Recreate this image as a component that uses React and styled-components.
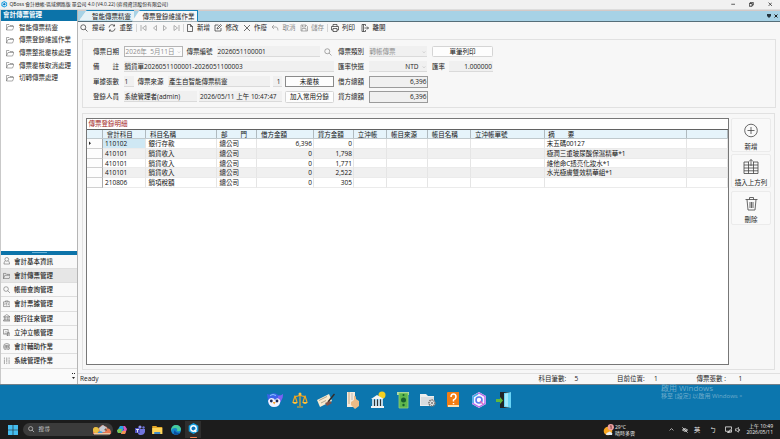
import React from "react";
import styled, { createGlobalStyle, css } from "styled-components";

const GlobalStyle = createGlobalStyle`
  * { box-sizing: border-box; }
  body { margin: 0; overflow: hidden; }
  svg { display: block; flex: none; }
`;

const Screen = styled.div`
  width: 780px; height: 439px; display: flex; flex-direction: column;
  font-family: "Open Sans", "Noto Sans CJK TC", sans-serif;
  font-size: 6.5px; line-height: 9px; color: #1c1c1c; white-space: pre;
  background: #0c76ae; overflow: hidden;
`;
const TitleBar = styled.header`
  height: 9.5px; flex: none; display: flex; align-items: center; background: #f1f1f1;
  padding: 0 8px 0 1px; border-bottom: 0.5px solid #ddd;
`;
const TitleText = styled.span`font-size: 4.87px; margin-left: 2px; color: #222; flex: 1;`;
const WindowButtons = styled.div`display: flex; gap: 14px; align-items: center;`;
const Body = styled.div`display: flex; height: 374px; flex: none; background: #f7f7f7;`;

const Sidebar = styled.aside`
  width: 78px; flex: none; display: flex; flex-direction: column;
  border-left: 1px solid #c9c9c9; border-right: 1px solid #b5b5b5; background: #fff;
`;
const SideHead = styled.div`
  height: 11.5px; background: #0c73a9; color: #fff; font-weight: 600; padding: 0.5px 2px; line-height: 10px;
`;
const Tree = styled.div`flex: 1; padding-top: 0;`;
const TreeItem = styled.div`
  height: 12.65px; display: flex; align-items: center; gap: 5px; padding-left: 5px; color: #222;
`;
const Splitter = styled.div`
  height: 3.5px; background: #0c73a9; display: flex; justify-content: center; align-items: center;
  &::after { content: ""; width: 15px; height: 1px; background: #69b1d7; }
`;
const NavItem = styled.div`
  height: 14.25px; display: flex; align-items: center; gap: 4px; padding-left: 1.5px;
  border-bottom: 1px solid #dedede; background: ${p => (p.$active ? "#e6e6e6" : "#f9f9f9")};
  font-weight: 500; color: #222;
`;
const NavFoot = styled.div`
  height: 15px; background: #fafafa; display: flex; align-items: center; justify-content: flex-end; padding: 0 2px 1px 0;
`;

const Main = styled.main`flex: 1; min-width: 0; display: flex; flex-direction: column;`;
const TabStrip = styled.div`
  height: 12px; flex: none; background: #a7d2e6; border-top: 1px solid #d5c9c6; border-bottom: 1px solid #566e79;
  display: flex; align-items: flex-end; padding: 0 1px 0 0;
`;
const Tab = styled.div`
  width: ${p => p.$w}px; height: ${p => (p.$active ? 12 : 11)}px; margin-bottom: ${p => (p.$active ? -1 : 0)}px;
  margin-left: ${p => (p.$active ? -2 : 1)}px; z-index: ${p => (p.$active ? 1 : 0)};
  background: ${p => (p.$active ? "#f8f8f8" : "#e6f1f6")};
  clip-path: polygon(8px 0, 100% 0, 100% 100%, 0 100%);
  border-top: 1px solid #1883bb; ${p => p.$active && css`border-right: 1px solid #1883bb;`}
  background-image: linear-gradient(125deg, #1883bb 0, #1883bb 4.9px, transparent 5.5px);
  padding-left: ${p => (p.$active ? 10.5 : 13)}px; line-height: 11px; font-weight: 400;
`;
const TabTools = styled.div`margin-left: auto; align-self: center; display: flex; gap: 3px; align-items: center; padding-right: 1px;`;
const Toolbar = styled.div`height: 13px; flex: none; display: flex; align-items: center; margin-top: -0.5px;`;
const Tool = styled.div`
  display: flex; align-items: center; gap: ${p => p.$gap ?? 3.5}px; margin-left: ${p => p.$ml}px;
  color: ${p => (p.$off ? "#8a8a8a" : "#222")};
`;
const Divider = styled.i`width: 1px; height: 8px; background: #d5d5d5; margin-left: ${p => p.$ml}px;`;

const FormPanel = styled.section`
  margin: 4.5px 4px 0; height: 69px; flex: none; border: 1px solid #e1e1e1; padding-top: 4.5px;
`;
const FormRow = styled.div`height: 15.1px; display: flex; align-items: center; padding-left: 10px;`;
const Label = styled.span`
  width: ${p => p.$w ?? 30.5}px; flex: none; margin-left: ${p => p.$ml ?? 0}px; color: #222;
`;
const Field = styled.div`
  width: ${p => p.$w}px; height: 11px; flex: none; margin-left: ${p => p.$ml ?? 0}px; padding: 1px 1px 0;
  line-height: 10px; background: #f0f0f0; border-bottom: 1px solid #dadada;
  display: flex; align-items: center; justify-content: ${p => (p.$right ? "flex-end" : "flex-start")};
  color: ${p => (p.$off ? "#8f8f8f" : "#222")};
`;
const DateField = styled(Field)`
  background: #fbfbfb; border: 1px solid #b5b5b5; justify-content: space-between; height: 11.5px; padding-top: 0;
`;
const SelectField = styled(Field)`gap: 3px; justify-content: ${p => (p.$right ? "flex-end" : "space-between")};`;
const TotalField = styled(Field)`height: 12px; border: 1px solid #9b9b9b; justify-content: flex-end; padding: 0; line-height: 9px;`;
const Button = styled.button`
  width: ${p => p.$w}px; height: 11.5px; flex: none; margin: 0 0 0 ${p => p.$ml ?? 0}px; padding: 0;
  font: inherit; line-height: 8px; color: #111; background: #fdfdfd;
  border: 1px solid ${p => (p.$strong ? "#8a8a8a" : "#d5d5d5")}; border-radius: ${p => (p.$strong ? 0 : 1.5)}px;
`;

const DetailPanel = styled.section`
  margin: 5px 5px 0 4px; height: 257px; flex: none; border: 1px solid #e1e1e1;
  display: flex; padding: 4px 3px 4px 3px; gap: 2px;
`;
const GridBox = styled.div`
  width: 643px; height: 247px; border: 1px solid #777; background: #fff; display: flex; flex-direction: column;
`;
const Caption = styled.div`height: 10px; color: #a32525; padding-left: 1.5px; line-height: 10px;`;
const Row = styled.div`
  display: grid; grid-template-columns: 16px 43.4px 71px 40px 56.6px 40px 33.4px 40.6px 43.4px 73.3px 142.4px 1fr;
  height: ${p => (p.$head ? 10.5 : 9.75)}px; line-height: ${p => (p.$head ? 9.6 : 10)}px; width: 641px;
  background: ${p => (p.$head ? "#e6f4fb" : p.$alt ? "#f0f0f0" : "#fff")};
  ${p => p.$head && css`border-top: 1px solid #626262; border-bottom: 0.5px solid #c0c9cd;`}
`;
const Cell = styled.div`
  border-right: 1px solid ${p => (p.$head ? "#b0babf" : "#e5e5e5")};
  ${p => !p.$head && css`border-bottom: 0.5px solid #ebebeb;`}
  padding: 0 ${p => (p.$head ? 3.7 : 2)}px; text-align: ${p => (p.$num ? "right" : "left")};
  overflow: hidden; color: #111;
  ${p => p.$num && css`padding-right: 1px;`}
  ${p => p.$marker && css`background: #fdfdfd; border-bottom: 1px solid #cfcfcf; border-right-color: #aaa; padding-left: 2px;`}
  ${p => p.$selected && css`background: #cfe8f4;`}
`;
const Actions = styled.div`width: 40px; display: flex; flex-direction: column; gap: 2.5px;`;
const Action = styled.div`
  height: 34px; border: 1px solid #ebebeb; border-radius: 2px; background: #f9f9f9; color: #222;
  display: flex; flex-direction: column; align-items: center; padding-top: 4px; gap: 4px;
`;
const StatusBar = styled.footer`
  margin-top: auto; height: 10.5px; border-top: 1px solid #e0e0e0; display: flex; align-items: center; padding-left: 2px;
`;
const Status = styled.span`width: ${p => p.$w}px; flex: none;`;

const Desktop = styled.div`
  height: 36.5px; flex: none; border-top: 1px solid #71808a; background: #0c76ae;
  display: flex; padding-left: 267px; position: relative;
`;
const Launcher = styled.div`display: flex; align-items: center; gap: 9.2px; padding-bottom: 5px;`;
const Watermark = styled.div`
  position: absolute; left: 661px; top: -2px; color: #6faccb; font-size: 6.05px; line-height: 8px;
  strong { display: block; font-weight: 400; font-size: 8px; line-height: 9px; }
`;
const Taskbar = styled.div`
  height: 19px; flex: none; background: #1c1c1c; color: #eee; display: flex; align-items: center; padding: 0 7px 0 8px;
`;
const SearchPill = styled.div`
  width: 90px; height: 13px; border-radius: 7px; background: #3b3b3b; margin-left: 5px; display: flex; align-items: center;
  padding: 0 1px 0 5px; gap: 4px; font-size: 5.7px; color: #ccc;
  span { flex: 1; }
`;
const Apps = styled.div`display: flex; gap: 7.7px; align-items: center; margin-left: 4px;`;
const ActiveApp = styled.div`
  width: 16px; height: 17px; margin-left: -3px; background: #2e2e2e; display: flex; flex-direction: column; align-items: center;
  justify-content: space-between; padding-top: 2px;
  &::after { content: ""; height: 1px; width: 7px; background: #ef8050; border-radius: 1px; }
`;
const Weather = styled.div`margin-left: auto; display: flex; gap: 1px; align-items: center; width: 65.5px; font-size: 5px; line-height: 6px;`;
const Tray = styled.div`display: flex; align-items: center; color: #f2f2f2; font-size: 6.2px;`;
const TraySlot = styled.div`width: ${p => p.$w}px; display: flex;`;
const Clock = styled.div`font-size: 5px; line-height: 6px; text-align: right; width: 29px; padding-bottom: 1px;`;

/* Line icons share one 16-unit grid */
const paths = {
  search: "M6.5 1.5a5 5 0 1 0 0 10a5 5 0 1 0 0-10M10.2 10.2L15 15",
  refresh: "M2 7a6 6 0 0 1 11-3v-3m0 3h-3M14 9a6 6 0 0 1-11 3v3m0-3h3",
  first: "M2 2v12M12 3L5 8l7 5z",
  prev: "M11 3L5 8l6 5z",
  next: "M5 3l6 5l-6 5z",
  last: "M14 2v12M4 3l7 5l-7 5z",
  file: "M3 1h6l4 4v10H3zM9 1v4h4",
  edit: "M9 2H2v12h12V8M6 10l1-3l6-6l2 2l-6 6z",
  close: "M2 2l12 12M14 2L2 14",
  undo: "M6 2L2 6l4 4M2 6h8q4 0 4 7",
  save: "M2 2h10l3 3v9H2zM5 2v4h6V2M4 14V9h8v5",
  print: "M4 5V1h8v4M4 12H1V5h14v7h-3M4 9h8v6H4z",
  exit: "M9 4V1H2v14h7v-3M5 1v14M7 8h8M12 5l3 3l-3 3",
  folder: "M1 14V3h5l2 2h6v2M1 14l3-7h12l-3 7z",
  user: "M8 1a4 4 0 1 0 0 8a4 4 0 1 0 0-8M5 8Q2 10 2 15h12q0-5-3-7",
  case: "M1 4h14v10H1zM5 4V2h6v2M6 8l2-2v6M4 7v4M12 7v4",
  bank: "M1 6l7-5l7 5zM3 6v7M6 6v7M10 6v7M13 6v7M1 13h14v2H1z",
  chart: "M1 1h10v10H1zM3 9h5M5 4l3 3M8 14h4M10 7l5 2v5l-3 2l-3-3zM11 11h3",
  coin: "M8 1a7 7 0 1 0 0 14a7 7 0 1 0 0-14M4 5h8v6H4zM4 8h8M8 5v6",
  sliders: "M3 1v2M3 6v9M8 1v8M8 12v3M13 1v2M13 6v9M2 4h2M7 10h2M12 4h2",
  chevron: "M3 6l5 5l5-5",
  up: "M2 11l6-6l6 6",
  min: "M1 8h14",
  restore: "M1 5h10v10H1zM5 5V1h10v10h-4",
  eyeoff: "M1 8q7-8 14 0q-7 8-14 0M1 1l14 14M6 8h4",
  net: "M11 12H1V2h14v6M5 15h6M11 9h4v5h-4zM8 12v3",
  sound: "M1 5h4l4-4v13l-4-4H1zM11 5q4 3 0 6",
};
const Icon = ({ n, s = 8, w = 1.3, c = "currentColor", fill = "none" }) => (
  <svg width={s} height={s} viewBox="0 0 16 16" fill={fill} stroke={c} strokeWidth={w} strokeLinejoin="round"><path d={paths[n]} /></svg>
);
const HexLogo = ({ s }) => (
  <svg width={s} height={s} viewBox="0 0 16 16"><path d="M8 0l7 4v8l-7 4l-7-4V4z" fill="#16a0e2" /><circle cx="8" cy="8" r="4" fill="#0873bd" stroke="#fff" strokeWidth="2" /><path d="M9 10l3 3" stroke="#fff" strokeWidth="2" /></svg>
);
const BigIcon = ({ children }) => <svg width="16" height="18" viewBox="0 0 16 18">{children}</svg>;

const Launchers = () => (
  <Launcher>
    <BigIcon>
      <path d="M0 3q3 1 4 0q4-2 7 1q3 1 5-1q0 4-2 7q-2 6-7 6q-6-1-6-7z" fill="#3c63ea" />
      <path d="M11 5q3 0 5-2q0 4-2 7l-3 3z" fill="#7d62f0" />
      <path d="M1 10q1-3 3.500-3T8 9q2-3 4-1q2 1 1 4q-1 4-6 4t-6-6" fill="#f2f3ff" />
      <circle cx="4.300" cy="10" r="1.400" fill="#202853" /><circle cx="10" cy="10" r="1.400" fill="#202853" />
      <path d="M5.700 11h3l-1.500 2.500z" fill="#f59a28" /><path d="M3 4.500q3-2 6 0" fill="none" stroke="#86c9ff" />
    </BigIcon>
    <BigIcon>
      <path d="M8 2v13M2 5q3 1 6-1q3 2 6 1M5 16h6M3 5l-2 6M3 5l2 6M13 5l-2 6M13 5l2 6" fill="none" stroke="#f1a51e" strokeWidth="1.2" />
      <path d="M0 11h6q-3 4-6 0M10 11h6q-3 4-6 0" fill="#ffc13c" /><circle cx="8" cy="3" r="1.5" fill="#ffc13c" />
    </BigIcon>
    <svg width="18" height="18" viewBox="0 0 18 18">
      <path d="M0 9L12 3l3 7L3 16z" fill="#f6ead0" /><path d="M2 9.500l8-4M4 12l5-2.500" stroke="#b5a88e" />
      <path d="M11 11l6.500-8" stroke="#332b29" strokeWidth="1.500" /><path d="M8 12l5-2l2 2l-5 3z" fill="#80534a" />
    </svg>
    <BigIcon>
      <path d="M2 1h8v15H2z" fill="#f5eadb" /><path d="M4 1v12" stroke="#c8a87e" /><path d="M7 2v7" stroke="#bbb" />
      <path d="M6 11l3-2V5q2-1 2 3l3 2v5l-4 3l-4-4z" fill="#eebb86" />
    </BigIcon>
    <BigIcon>
      <circle cx="12" cy="4" r="3.5" fill="#f5d020" /><path d="M1 8l6-4l7 4zM1 15h13v2H1z" fill="#f3f3f3" />
      <path d="M3 8v7M6 8v7M9 8v7M12 8v7" stroke="#f6f6f6" strokeWidth="1.5" /><path d="M4.5 9v6M7.5 9v6M10.5 9v6" stroke="#333" strokeWidth="1" />
    </BigIcon>
    <BigIcon>
      <path d="M2 1h12v3H2z" fill="#b5dca7" /><path d="M4 2h9v15H4z" fill="#5fb74d" stroke="#94cf73" strokeWidth=".8" />
      <circle cx="8.5" cy="9" r="2.5" fill="#17612e" /><circle cx="8.5" cy="4" r="1" fill="#17612e" /><circle cx="8.5" cy="14" r="1.2" fill="#17612e" />
    </BigIcon>
    <BigIcon>
      <path d="M0 3h6l2 2h6v10H0z" fill="#eceded" /><path d="M1 6h13v8H1z" fill="#d8dcdf" />
      <circle cx="12" cy="12" r="3" fill="#e2e2e2" stroke="#777" strokeWidth="1.7" strokeDasharray="1.4 .8" /><circle cx="12" cy="12" r="1" fill="#777" />
    </BigIcon>
    <BigIcon>
      <path d="M2 2q0-1 1-1h11v15H3q-1 0-1-1z" fill="#f27d13" /><path d="M3 14h11v2H3z" fill="#ffe0ae" />
      <path d="M6 6q0-3 2.5-3T11 6q0 2-2.5 3v1.5M8.5 12v1.3" fill="none" stroke="#fff" strokeWidth="1.5" />
    </BigIcon>
    <BigIcon>
      <path d="M8 1l7 4v8l-7 4l-7-4V5z" fill="#f8f2ff" /><path d="M8 2l6 3.5v7L8 16l-6-3.5v-7z" fill="none" stroke="#b66ae7" strokeWidth="1.4" />
      <path d="M2 12V6l5-3" fill="none" stroke="#35bdea" strokeWidth="1.4" /><circle cx="8" cy="9" r="3" fill="#fff" stroke="#5b7df0" strokeWidth="1.6" /><path d="M9 10l3 3" stroke="#e269bf" strokeWidth="1.5" />
    </BigIcon>
    <BigIcon>
      <path d="M4 1h11v16H4z" fill="#202428" /><path d="M8 2l7-1v16l-7-1z" fill="#68d5f7" /><path d="M9 3l3-1v14l-3-1z" fill="#a5e9fb" />
      <path d="M0 8h4V6l3 3.5L4 13v-2H0z" fill="#60b83c" />
    </BigIcon>
  </Launcher>
);

const tree = ["智能傳票精靈", "傳票登錄維護作業", "傳票整批覆核處理", "傳票覆核取消處理", "切轉傳票處理"];
const nav = [["user", "會計基本資訊"], ["folder", "會計傳票管理"], ["search", "帳冊查詢管理"], ["case", "會計票據管理"],
  ["bank", "銀行往來管理"], ["chart", "立沖立帳管理"], ["coin", "會計輔助作業"], ["sliders", "系統管理作業"]];
const heads = ["", "會計科目", "科目名稱", "部　　門", "借方金額", "貸方金額", "立沖帳", "帳目來源", "帳目名稱", "立沖帳單號", "摘　　要", ""];
const rows = [
  ["110102", "銀行存款", "6,396", "0", "末五碼00127"],
  ["410101", "銷貨收入", "0", "1,798", "極潤三重玻尿酸保濕精華*1"],
  ["410101", "銷貨收入", "0", "1,771", "維他命C透亮化妝水*1"],
  ["410101", "銷貨收入", "0", "2,522", "水光極膚雙效精華組*1"],
  ["210806", "銷項稅額", "0", "305", ""],
];

export default function App() {
  return (
    <Screen>
      <GlobalStyle />
      <TitleBar>
        <HexLogo s={6.5} />
        <TitleText>QBoss 會計總帳-區域網路版 單公司 4.0 (V4.0.22) (弈飛資訊股份有限公司)</TitleText>
        <WindowButtons><Icon n="min" s={4.5} w={2.5} /><Icon n="restore" s={4.5} w={2.8} /><Icon n="close" s={4.5} w={2.5} /></WindowButtons>
      </TitleBar>
      <Body>
        <Sidebar>
          <SideHead>會計傳票管理</SideHead>
          <Tree>{tree.map(t => <TreeItem key={t}><Icon n="folder" s={8} w={1.1} c="#666" />{t}</TreeItem>)}</Tree>
          <Splitter />
          {nav.map(([i, t]) => <NavItem key={t} $active={i === "folder"}><Icon n={i} s={7.5} c="#555" w={1.1} />{t}</NavItem>)}
          <NavFoot><svg width="3" height="6" viewBox="0 0 3 6"><path d="M0 0h1v1H0zM2 0h1v1H2zM0 4h3L1.5 6z" fill="#222" /></svg></NavFoot>
        </Sidebar>
        <Main>
          <TabStrip>
            <Tab $w={55}>智能傳票精靈</Tab>
            <Tab $w={66} $active>傳票登錄維護作業</Tab>
            <TabTools><svg width="4" height="4"><path d="M0 0h4v2L2 4L0 2z" fill="#24353f" /></svg><Icon n="close" s={4} w={4} /></TabTools>
          </TabStrip>
          <Toolbar>
            <Tool $ml={2} $gap={4}><Icon n="search" s={8} />搜尋</Tool>
            <Tool $ml={3}><Icon n="refresh" s={8} />重整</Tool>
            <Divider $ml={3.5} />
            <Tool $ml={3} $off><Icon n="first" s={8} /></Tool>
            <Tool $ml={2.5} $off><Icon n="prev" s={8} /></Tool>
            <Tool $ml={2.5} $off><Icon n="next" s={8} /></Tool>
            <Tool $ml={3} $off><Icon n="last" s={8} /></Tool>
            <Divider $ml={3} />
            <Tool $ml={1.5}><Icon n="file" s={8} />新增</Tool>
            <Tool $ml={4}><Icon n="edit" s={8} />修改</Tool>
            <Tool $ml={4}><Icon n="close" s={8} />作廢</Tool>
            <Tool $ml={4} $off><Icon n="undo" s={8} />取消</Tool>
            <Tool $ml={4} $off><Icon n="save" s={8} />儲存</Tool>
            <Divider $ml={2.5} />
            <Tool $ml={3}><Icon n="print" s={8} />列印</Tool>
            <Tool $ml={5.5} $gap={4}><Icon n="exit" s={8} />離開</Tool>
          </Toolbar>
          <FormPanel>
            <FormRow>
              <Label>傳票日期</Label><DateField $w={59.5} $off>2026年  5月11日<Icon n="chevron" s={4} /></DateField>
              <Label $ml={3.5}>傳票編號</Label><Field $w={103.5} $ml={-0.5}>2026051100001</Field>
              <Label $ml={4} $w={14}><Icon n="search" s={8} c="#666" w={1.1} /></Label>
              <Label>傳票類別</Label><SelectField $w={58} $off>轉帳傳票<Icon n="chevron" s={4} /></SelectField>
              <Button $w={61} $ml={5.5}>單筆列印</Button>
            </FormRow>
            <FormRow>
              <Label>備　　註</Label><Field $w={210}>銷貨單2026051100001-2026051100003</Field>
              <Label $ml={4.5}>匯率快選</Label><SelectField $w={58} $right>NTD<Icon n="chevron" s={4} c="#888" /></SelectField>
              <Label $ml={5.5} $w={17}>匯率</Label><Field $w={44} $right>1.000000</Field>
            </FormRow>
            <FormRow>
              <Label>單據張數</Label><Field $w={10.5}>1</Field>
              <Label $ml={3.5}>傳票來源</Label><Field $w={102}>產生自智能傳票精靈</Field>
              <Field $w={9} $ml={2.5} $right>1</Field>
              <Button $w={49} $ml={3.5} $strong>未覆核</Button>
              <Label $ml={4}>借方總額</Label><TotalField $w={59}>6,396</TotalField>
            </FormRow>
            <FormRow>
              <Label>登錄人員</Label><Field $w={73}>系統管理者(admin)</Field>
              <Field $w={83} $ml={2.5}>2026/05/11 上午 10:47:47</Field>
              <Button $w={49} $ml={3}>加入常用分錄</Button>
              <Label $ml={4}>貸方總額</Label><TotalField $w={59}>6,396</TotalField>
            </FormRow>
          </FormPanel>
          <DetailPanel>
            <GridBox>
              <Caption>傳票登錄明細</Caption>
              <Row $head>{heads.map((h, i) => <Cell $head key={i}>{h}</Cell>)}</Row>
              {rows.map(([code, name, debit, credit, note], i) => (
                <Row key={i} $alt={i % 2 === 1}>
                  <Cell $marker>{i === 0 && <svg width="2.5" height="8"><path d="M0 2.5l2 1.700L0 6z" fill="#222" /></svg>}</Cell>
                  <Cell $selected={i === 0}>{code}</Cell><Cell>{name}</Cell><Cell>總公司</Cell>
                  <Cell $num>{debit}</Cell><Cell $num>{credit}</Cell>
                  <Cell /><Cell /><Cell /><Cell /><Cell>{note}</Cell><Cell />
                </Row>
              ))}
            </GridBox>
            <Actions>
              <Action>
                <svg width="14" height="15" viewBox="0 0 14 14" fill="none" stroke="#444" strokeWidth=".8"><circle cx="7" cy="7" r="6.3" /><path d="M7 3.5v7M3.5 7h7" /></svg>新增
              </Action>
              <Action>
                <svg width="16" height="15" viewBox="0 0 16 15" fill="none" stroke="#444" strokeWidth=".8"><path d="M6 3H1v11.5h14V3h-5M1 6h14M1 9h14M1 11.8h14M5.5 3v11.5M10.5 3v11.5M8 7V.5M6 2.5l2-2l2 2" /></svg>插入上方列
              </Action>
              <Action>
                <svg width="13" height="15" viewBox="0 0 13 14" fill="none" stroke="#444" strokeWidth=".8"><path d="M.5 3h12M4.5 3V1h4v2M2 3l1 10.5h7L11 3M5 5.5v6M6.5 5.5v6M8 5.5v6" /></svg>刪除
              </Action>
            </Actions>
          </DetailPanel>
          <StatusBar>
            <Status $w={458.5}>Ready</Status>
            <Status $w={36}>科目筆數:</Status><Status $w={42.5}>5</Status>
            <Status $w={37}>目前位置:</Status><Status $w={42.5}>1</Status>
            <Status $w={42}>傳票張數 :</Status><Status $w={20}>1</Status>
          </StatusBar>
        </Main>
      </Body>
      <Desktop>
        <Launchers />
        <Watermark><strong>啟用 Windows</strong>移至 [設定] 以啟用 Windows。</Watermark>
      </Desktop>
      <Taskbar>
        <svg width="10" height="10" viewBox="0 0 10 10"><path d="M0 0h4.7v4.7H0zM5.3 0H10v4.7H5.3zM0 5.3h4.7V10H0zM5.3 5.3H10V10H5.3z" fill="#45bdf0" /></svg>
        <SearchPill>
          <Icon n="search" s={6.5} w={1.8} /><span>搜尋</span>
          <svg width="20" height="11" viewBox="0 0 20 11"><path d="M1 10V5l2-2l3 2l4-4l5 2l1 3l3 1v3z" fill="#db7356" /><circle cx="4" cy="6" r="3" fill="#eac143" /><path d="M7 4l4-3l4 3l-2 4H8z" fill="#c5cad2" /><path d="M6 8l3-1l3 3H6z" fill="#3b9edb" /><circle cx="16" cy="7" r="2.5" fill="#ea7c53" /><path d="M12 6l2-2l1 3z" fill="#775b46" /><path d="M2 9h16v1.5H2z" fill="#f1c8a3" /></svg>
        </SearchPill>
        <Apps>
          <svg width="10" height="10" viewBox="0 0 10 10"><path d="M3 1h3l1 2L5 8H1L0 6z" fill="#29a3e2" /><path d="M0 5l1 3h3l1-4H2z" fill="#7ac650" /><path d="M6 1h2l2 3l-2 5H4l3-5z" fill="#d958bd" /><path d="M5 6h4L8 9H4z" fill="#f1934f" /></svg>
          <svg width="10" height="10" viewBox="0 0 10 10"><circle cx="5" cy="2" r="1.6" fill="#8f91ef" /><circle cx="8.5" cy="2.5" r="1.2" fill="#7073da" /><path d="M3 4h7v3q-1 3-4 3T3 8z" fill="#7175dd" /><path d="M0 3h5v5H0z" fill="#4e50be" /><path d="M1 4.5h3M2.5 4.5v3" stroke="#fff" strokeWidth=".8" /></svg>
          <svg width="10.5" height="10" viewBox="0 0 10 10"><path d="M0 1h4l1 1h5v7H0z" fill="#e5a728" /><path d="M0 3h10v6H0z" fill="#ffd559" /><path d="M2 7h6v2H2z" fill="#418ac6" /></svg>
          <svg width="10" height="10" viewBox="0 0 10 10"><circle cx="5" cy="5" r="5" fill="#1686cc" /><path d="M0 5q1-5 5-5t5 4q0 3-4 2q1-3-2-3T0 6" fill="#48cc9b" /><path d="M4 5q0 3 5 3q-2 2-4 2Q1 9 4 5" fill="#0c4f9e" /></svg>
          <ActiveApp><HexLogo s={11} /></ActiveApp>
        </Apps>
        <Weather>
          <svg width="11" height="12" viewBox="0 0 11 12"><circle cx="5" cy="7" r="4.3" fill="#f7a621" /><path d="M3 11q0-3 2-2.500q2-2 3 0q2 0 1 2.500z" fill="#e8eef4" /><circle cx="7.8" cy="3.2" r="3.1" fill="#eda0a0" /><path d="M7.2 2.2l.9-.6v3.4" stroke="#551f1f" fill="none" strokeWidth=".7" /></svg>
          <div>29°C<br />晴時多雲</div>
        </Weather>
        <Tray>
          <TraySlot $w={13}><Icon n="up" s={5} w={2.2} /></TraySlot>
          <TraySlot $w={12.5}><Icon n="eyeoff" s={6} w={2} /></TraySlot>
          <TraySlot $w={16}>英</TraySlot>
          <TraySlot $w={15}>ㄅ</TraySlot>
          <TraySlot $w={10}><Icon n="net" s={7} w={1.8} /></TraySlot>
          <TraySlot $w={9}><Icon n="sound" s={6} w={1.8} /></TraySlot>
          <Clock>上午 10:49<br />2026/05/11</Clock>
        </Tray>
      </Taskbar>
    </Screen>
  );
}
